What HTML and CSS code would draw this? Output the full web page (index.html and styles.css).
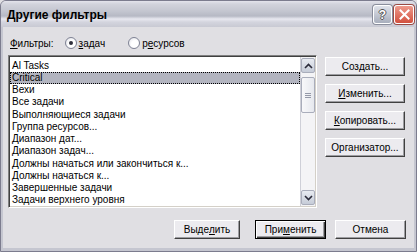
FILE: index.html
```html
<!DOCTYPE html>
<html lang="ru">
<head>
<meta charset="utf-8">
<title>Другие фильтры</title>
<link rel="stylesheet" href="styles.css">
</head>
<body>
<div class="window">
  <div class="titlebar">
    <span class="title">Другие фильтры</span>
    <div class="caption-buttons">
      <div class="cbtn help"><span>?</span></div>
      <div class="cbtn close"><svg width="11" height="11" viewBox="0 0 11 11"><path d="M1.5 1.5 L9.5 9.5 M9.5 1.5 L1.5 9.5" stroke="#fff" stroke-width="2" stroke-linecap="square"/></svg></div>
    </div>
  </div>
  <div class="client">
    <div class="filter-row">
      <span class="label"><u>Ф</u>ильтры:</span>
      <span class="radio"><span class="dot checked"></span><span><u>з</u>адач</span></span>
      <span class="radio second"><span class="dot"></span><span>р<u>е</u>сурсов</span></span>
    </div>
    <div class="main">
      <div class="listbox">
        <ul class="items">
          <li>Al Tasks</li>
          <li class="selected"><span>Critical</span></li>
          <li>Вехи</li>
          <li>Все задачи</li>
          <li>Выполняющиеся задачи</li>
          <li>Группа ресурсов...</li>
          <li>Диапазон дат...</li>
          <li>Диапазон задач...</li>
          <li>Должны начаться или закончиться к...</li>
          <li>Должны начаться к...</li>
          <li>Завершенные задачи</li>
          <li>Задачи верхнего уровня</li>
        </ul>
        <div class="scrollbar">
          <div class="sb-btn"><svg width="9" height="6" viewBox="0 0 9 6"><path d="M1 5 L4.5 1.5 L8 5" fill="none" stroke="#2b2b3a" stroke-width="1.6"/></svg></div>
          <div class="sb-track">
            <div class="sb-thumb"><span class="grip"></span><span class="grip"></span><span class="grip"></span></div>
          </div>
          <div class="sb-btn"><svg width="9" height="6" viewBox="0 0 9 6"><path d="M1 1 L4.5 4.5 L8 1" fill="none" stroke="#2b2b3a" stroke-width="1.6"/></svg></div>
        </div>
      </div>
      <div class="side">
        <div class="btn">Соз<u>д</u>ать...</div>
        <div class="btn"><u>И</u>зменить...</div>
        <div class="btn"><u>К</u>опировать...</div>
        <div class="btn">Организатор...</div>
      </div>
    </div>
    <div class="bottom">
      <div class="btn btn-select">Выде<u>л</u>ить</div>
      <div class="btn btn-apply default">При<u>м</u>енить</div>
      <div class="btn btn-cancel">Отмена</div>
    </div>
  </div>
</div>
</body>
</html>
```
FILE: styles.css
```css
html, body {
  margin: 0;
  padding: 0;
  background: #e0dfe3;
}
body {
  width: 417px;
  height: 252px;
  overflow: hidden;
  font-family: "Liberation Sans", Arial, sans-serif;
  font-size: 10px;
  color: #000;
}
u { text-decoration: underline; text-underline-offset: 1px; }

.window {
  width: 417px;
  height: 252px;
  box-sizing: border-box;
  border: 1px solid #7c7c8e;
  border-radius: 6px 6px 0 0;
  background: #c5c6d0;
  display: flex;
  flex-direction: column;
  overflow: hidden;
}

.titlebar {
  height: 26px;
  flex: none;
  display: flex;
  align-items: center;
  justify-content: space-between;
  padding: 0 2px 0 6px;
  background: linear-gradient(to bottom, #e4e4ec 0px, #d2d3dc 3px, #c4c6d0 10px, #b6b9c4 15px, #e8e8f0 18px, #d4d5de 21px, #c8c9d3 26px);
}
.title {
  font-weight: bold;
  font-size: 12px;
  color: #000;
  padding-top: 1px;
}
.caption-buttons {
  display: flex;
  gap: 2px;
  padding-top: 1px;
}
.cbtn {
  width: 19px;
  height: 19px;
  box-sizing: border-box;
  border: 1px solid #fff;
  border-radius: 3px;
  display: flex;
  align-items: center;
  justify-content: center;
}
.cbtn.help {
  background: linear-gradient(to bottom, #dfe2ea, #a8aebc);
  box-shadow: 0 0 0 1px #8a8e9c;
  color: #fff;
  font-weight: bold;
  font-size: 12px;
  text-shadow: 1px 0 #555, -1px 0 #555, 0 1px #555, 0 -1px #555;
}
.cbtn.close {
  width: 20px;
  background: linear-gradient(to bottom, #ee9a8c, #d2503e);
  box-shadow: 0 0 0 1px #9a4a44;
}

.client {
  flex: 1;
  margin: 0 2px 3px 2px;
  background: #e0dfe3;
  padding: 9px 0 0 5px;
  display: flex;
  flex-direction: column;
}

.filter-row {
  height: 14px;
  display: flex;
  align-items: center;
}
.label {
  margin-left: 2px;
  margin-right: 11px;
}
.radio {
  display: flex;
  align-items: center;
  gap: 2px;
}
.radio.second { margin-left: 23px; }
.dot {
  width: 12px;
  height: 12px;
  box-sizing: border-box;
  border-radius: 50%;
  border: 1px solid #7f8294;
  background: radial-gradient(circle at 60% 60%, #fff 40%, #dcdce4 100%);
  position: relative;
}
.dot.checked::after {
  content: "";
  position: absolute;
  left: 3px;
  top: 3px;
  width: 4px;
  height: 4px;
  border-radius: 50%;
  background: #30303c;
}

.main {
  margin-top: 5px;
  display: flex;
  align-items: flex-start;
}
.listbox {
  width: 309px;
  height: 153px;
  box-sizing: border-box;
  border: 1px solid;
  border-color: #808080 #fff #fff #808080;
  box-shadow: inset 1px 1px #404040, inset -1px -1px #d4d0c8;
  background: #fff;
  padding: 1px;
  display: flex;
}
.items {
  list-style: none;
  margin: 0;
  padding: 2.5px 0 0 0;
  flex: 1;
  overflow: hidden;
}
.items li {
  height: 12.27px;
  line-height: 12.27px;
  padding-left: 2px;
  white-space: nowrap;
}
.items li.selected {
  background: #b2b4bf;
  outline: 1px dotted #000;
  outline-offset: -1px;
}

.scrollbar {
  width: 14px;
  display: flex;
  flex-direction: column;
  background: #f4f4f6;
  border-left: 1px solid #cfd0d8;
  padding: 1px 0;
}
.sb-btn {
  height: 15px;
  flex: none;
  box-sizing: border-box;
  border: 1px solid #a9adbb;
  border-radius: 2px;
  background: linear-gradient(to bottom, #e8ebf1, #c6ccd8);
  display: flex;
  align-items: center;
  justify-content: center;
}
.sb-track {
  flex: 1;
  padding-top: 4px;
}
.sb-thumb {
  height: 36px;
  box-sizing: border-box;
  border: 1px solid #a9adbb;
  border-radius: 2px;
  background: linear-gradient(to right, #f8f8fa, #e6e8ee);
  display: flex;
  flex-direction: column;
  align-items: center;
  justify-content: center;
  gap: 1px;
}
.grip {
  width: 6px;
  height: 1px;
  background: #9599a8;
}

.side {
  margin-left: 8px;
  margin-top: 2px;
  width: 80px;
  display: flex;
  flex-direction: column;
  gap: 8px;
}
.btn {
  height: 19px;
  box-sizing: border-box;
  background: #ecebef;
  border: 1px solid;
  border-color: #fff #404040 #404040 #fff;
  box-shadow: inset -1px -1px #9d9da1;
  display: flex;
  align-items: center;
  justify-content: center;
  white-space: nowrap;
}
.btn.default {
  border: 1px solid #000;
  box-shadow: inset 1px 1px #fff, inset -1px -1px #404040, inset -2px -2px #9d9da1;
}

.bottom {
  margin-top: 12px;
  display: flex;
  justify-content: flex-end;
  padding-right: 8px;
}
.btn-select { width: 66px; margin-right: 15px; }
.btn-apply { width: 71px; margin-right: 9px; }
.btn-cancel { width: 71px; }
```
